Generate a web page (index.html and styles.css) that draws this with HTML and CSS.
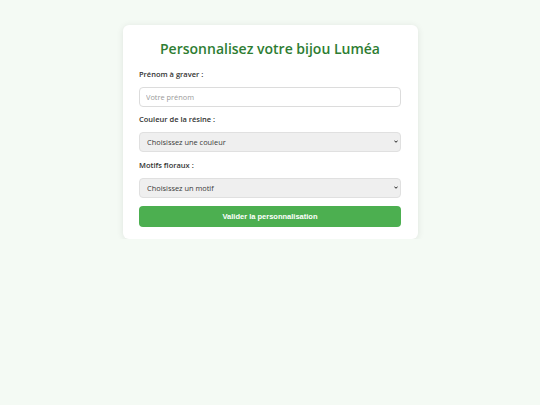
FILE: index.html
```html
<!DOCTYPE html>
<html lang="fr">
<head>
<meta charset="utf-8">
<title>Personnalisez votre bijou Luméa</title>
<link rel="stylesheet" href="styles.css">
</head>
<body>
<main class="page">
  <form class="card">
    <h1 class="title">Personnalisez votre bijou Luméa</h1>
    <label class="label" for="prenom">Prénom à graver :</label>
    <input class="field" id="prenom" type="text" placeholder="Votre prénom">
    <label class="label" for="couleur">Couleur de la résine :</label>
    <div class="select-wrap">
      <select class="field select" id="couleur">
        <option>Choisissez une couleur</option>
      </select>
      <svg class="chevron" viewBox="0 0 4 3" width="4" height="3" aria-hidden="true"><path d="M0.4 0.6 L2 2.3 L3.6 0.6" fill="none" stroke="#222" stroke-width="1"/></svg>
    </div>
    <label class="label" for="motif">Motifs floraux :</label>
    <div class="select-wrap">
      <select class="field select" id="motif">
        <option>Choisissez un motif</option>
      </select>
      <svg class="chevron" viewBox="0 0 4 3" width="4" height="3" aria-hidden="true"><path d="M0.4 0.6 L2 2.3 L3.6 0.6" fill="none" stroke="#222" stroke-width="1"/></svg>
    </div>
    <button class="submit" type="button">Valider la personnalisation</button>
  </form>
</main>
</body>
</html>
```
FILE: styles.css
```css
html, body {
  margin: 0;
  padding: 0;
}
body {
  background: #f4faf4;
  font-family: "Open Sans", "DejaVu Sans", sans-serif;
  color: #333;
}
.page {
  display: flex;
  justify-content: center;
  padding-top: 25px;
}
.card {
  box-sizing: border-box;
  width: 295px;
  background: #fff;
  border-radius: 6px;
  box-shadow: 0 1px 7px rgba(0, 0, 0, 0.09);
  padding: 13.5px 16.5px 12px;
  display: flex;
  flex-direction: column;
}
.title {
  margin: 0 0 10.5px;
  text-align: center;
  font-size: 14px;
  font-weight: 600;
  color: #2e7d32;
  line-height: 20px;
}
.label {
  font-size: 7.5px;
  font-weight: 600;
  color: #333;
  line-height: 11px;
  margin-bottom: 7px;
}
.field {
  box-sizing: border-box;
  width: 100%;
  height: 19.5px;
  margin: 0 0 7px;
  padding: 0 6px;
  border: 1px solid #dcdcdc;
  border-radius: 4px;
  font-family: "Open Sans", sans-serif;
  font-size: 7.4px;
  color: #333;
  background: #fff;
  outline: none;
}
.field::placeholder {
  color: #9a9a9a;
}
.select-wrap {
  position: relative;
  margin-bottom: 7.5px;
}
.select {
  -webkit-appearance: none;
  appearance: none;
  display: block;
  height: 20.5px;
  margin: 0;
  padding: 0 7px;
  background: #efefef;
  border-color: #e0e0e0;
  color: #3a3a3a;
}
.chevron {
  position: absolute;
  right: 3px;
  top: 8.5px;
  pointer-events: none;
}
.submit {
  height: 21px;
  border: none;
  border-radius: 4px;
  background: #4caf50;
  color: #fff;
  font-family: "Liberation Sans", Arial, sans-serif;
  font-weight: bold;
  font-size: 7.5px;
}
```
